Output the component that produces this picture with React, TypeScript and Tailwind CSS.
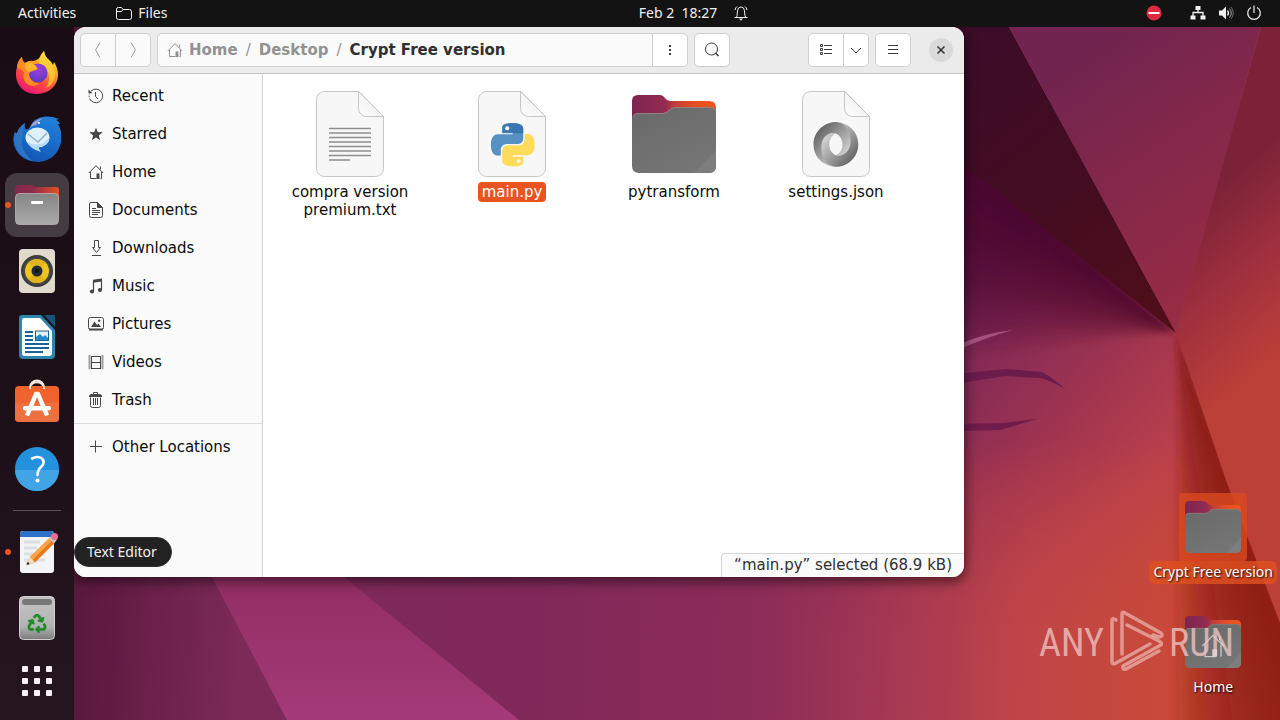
import React, { ReactNode } from 'react';
import { FaRecycle } from 'react-icons/fa';

const PYTHON_HALF =
  'M14.25.18l.9.2.73.26.59.3.45.32.34.34.25.34.16.33.1.3.04.26.02.2-.01.13V8.5l-.05.63-.13.55-.21.46-.26.38-.3.31-.33.25-.35.19-.35.14-.33.1-.3.07-.26.04-.21.02H8.77l-.69.05-.59.14-.5.22-.41.27-.33.32-.27.35-.2.36-.15.37-.1.35-.07.32-.04.27-.02.21v3.06H3.17l-.21-.03-.28-.07-.32-.12-.35-.18-.36-.26-.36-.36-.35-.46-.32-.59-.28-.73-.21-.88-.14-1.05-.05-1.23.06-1.22.16-1.04.24-.87.32-.71.36-.57.4-.44.42-.33.42-.24.4-.16.36-.1.32-.05.24-.01h.16l.06.01h8.16v-.83H6.18l-.01-2.75-.02-.37.05-.34.11-.31.17-.28.25-.26.31-.23.38-.2.44-.18.51-.15.58-.12.64-.1.71-.06.77-.04.84-.02 1.27.05zm-6.3 1.98l-.23.33-.08.41.08.41.23.34.33.22.41.09.41-.09.33-.22.23-.34.08-.41-.08-.41-.23-.33-.33-.22-.41-.09-.41.09z';

/* ---------- wallpaper ---------- */

const Wallpaper = () => (
  <svg
    className="absolute inset-0 h-full w-full"
    viewBox="0 0 1280 720"
    preserveAspectRatio="xMidYMid slice"
    aria-hidden="true"
  >
    <defs>
      <linearGradient id="wBase" gradientUnits="userSpaceOnUse" x1="74" y1="600" x2="1180" y2="640">
        <stop offset="0" stopColor="#5a183e" />
        <stop offset="0.15" stopColor="#7c2a58" />
        <stop offset="0.4" stopColor="#80285a" />
        <stop offset="0.62" stopColor="#8c2c58" />
        <stop offset="0.76" stopColor="#a93a52" />
        <stop offset="0.86" stopColor="#c04547" />
        <stop offset="1" stopColor="#c94a38" />
      </linearGradient>
      <linearGradient id="wLower" gradientUnits="userSpaceOnUse" x1="920" y1="330" x2="1190" y2="560">
        <stop offset="0" stopColor="#74245a" />
        <stop offset="0.5" stopColor="#a2354f" />
        <stop offset="0.75" stopColor="#b8404c" />
        <stop offset="1" stopColor="#c64640" />
      </linearGradient>
      <linearGradient id="wLowerFade" x1="0" y1="0" x2="0" y2="1">
        <stop offset="0" stopColor="#fff" />
        <stop offset="0.55" stopColor="#fff" />
        <stop offset="0.85" stopColor="#000" />
      </linearGradient>
      <mask id="wLowerMask">
        <rect x="800" y="100" width="480" height="620" fill="url(#wLowerFade)" />
      </mask>
      <filter id="wSoft">
        <feGaussianBlur stdDeviation="3" />
      </filter>
      <linearGradient id="wDark" gradientUnits="userSpaceOnUse" x1="970" y1="60" x2="1170" y2="330">
        <stop offset="0" stopColor="#3d0c28" />
        <stop offset="0.5" stopColor="#440c20" />
        <stop offset="1" stopColor="#500e18" />
      </linearGradient>
      <linearGradient id="wTop" gradientUnits="userSpaceOnUse" x1="1050" y1="70" x2="1200" y2="290">
        <stop offset="0" stopColor="#70244f" />
        <stop offset="0.5" stopColor="#84284a" />
        <stop offset="1" stopColor="#962b44" />
      </linearGradient>
      <linearGradient id="wRight" gradientUnits="userSpaceOnUse" x1="1200" y1="200" x2="1310" y2="330">
        <stop offset="0" stopColor="#7b2238" />
        <stop offset="0.5" stopColor="#a0303e" />
        <stop offset="1" stopColor="#bc4038" />
      </linearGradient>
      <linearGradient id="wStripe" x1="0" y1="0" x2="0" y2="1">
        <stop offset="0" stopColor="#922e64" />
        <stop offset="1" stopColor="#a43a78" />
      </linearGradient>
    </defs>
    <rect width="1280" height="720" fill="url(#wBase)" />
    <g mask="url(#wLowerMask)">
      <path d="M800 100H1280V720H800Z" fill="url(#wLower)" />
    </g>
    {/* shading fans out from the point where the folds meet */}
    <g fill="#40102f" fillOpacity="0.07" filter="url(#wSoft)">
      {Array.from({ length: 25 }, (_, i) => (
        <path key={i} d={`M1176 333L900 100V${125 + i * 10}Z`} />
      ))}
    </g>
    <g fill="#8c1a14" fillOpacity="0.1" filter="url(#wSoft)">
      {Array.from({ length: 20 }, (_, i) => (
        <path key={i} d={`M1176 333L1330 740H${1305 - i * 7}Z`} />
      ))}
    </g>
    <path d="M900 27H1009L1176 333L900 115Z" fill="url(#wDark)" />
    <path d="M1009 27H1261L1176 333Z" fill="url(#wTop)" />
    <path d="M1261 27H1280V623L1226 480L1176 333Z" fill="url(#wRight)" />
    <path d="M212 577H344L519 720H287Z" fill="url(#wStripe)" />
    <path d="M960 344Q985 333 1013 330Q990 336 960 349Z" fill="#a85080" />
    <path d="M955 374L1006 369L1042 372Q1056 380 1065 389Q1052 381 1040 378L1005 376L955 384Z" fill="#6c1c4c" />
    <path d="M955 424L1003 423L1037 419L1000 430L955 431Z" fill="#701c4c" />
  </svg>
);

/* ---------- symbolic icons ---------- */

interface SymProps {
  children: ReactNode;
  className?: string;
}

const Sym = ({ children, className = 'size-4' }: SymProps) => (
  <svg
    className={`${className} shrink-0`}
    viewBox="0 0 16 16"
    fill="none"
    stroke="currentColor"
    strokeWidth="1"
    aria-hidden="true"
  >
    {children}
  </svg>
);

const HomeGlyph = () => (
  <>
    <path d="M.8 9L8 1.7L15.2 9M2.5 8V14.5H8.5M13.5 8V14.5H12.5M12.5 2.5V5.5" />
    <path d="M8.5 9.5H11.5V15H8.5Z" fill="currentColor" stroke="none" />
  </>
);

const places = [
  {
    name: 'Recent',
    glyph: (
      <>
        <path d="M3 3.2A6.8 6.8 0 1 1 1.6 10.5" />
        <path d="M1.2 9.2A6.8 6.8 0 0 1 1.6 5.5" strokeDasharray="1.5 1.2" />
        <path d="M.5 1.5V5.3H4.5Z" fill="currentColor" stroke="none" />
        <path d="M7.5 4V8.5L10 11" />
      </>
    ),
  },
  {
    name: 'Starred',
    glyph: (
      <path
        d="M8 1.5L9.7 6.1L14.7 6.3L10.8 9.4L12.2 14.2L8 11.4L3.8 14.2L5.2 9.4L1.3 6.3L6.3 6.1Z"
        fill="currentColor"
        stroke="none"
      />
    ),
  },
  { name: 'Home', glyph: <HomeGlyph /> },
  {
    name: 'Documents',
    glyph: (
      <>
        <path d="M3 .5H9.5L14.5 5.5V13.5A2 2 0 0 1 12.5 15.5H3.5A2 2 0 0 1 1.5 13.5V2A1.5 1.5 0 0 1 3 .5Z" />
        <path d="M9.5 .5V5.5H14.5Z" fill="currentColor" />
        <path d="M4 6.5H8M4 8.5H12M4 10.5H12M4 12.5H10" />
      </>
    ),
  },
  {
    name: 'Downloads',
    glyph: <path d="M6.5 .5H10.5V7.5H12.5L8.5 12.5L4.5 7.5H6.5ZM4 15.5H13" />,
  },
  {
    name: 'Music',
    glyph: (
      <>
        <path d="M5.5 13V2.5M13.5 1V11.5" strokeWidth="1.2" />
        <path d="M5 1.8L14 .6V3.6L5 4.8Z" fill="currentColor" stroke="none" />
        <circle cx="4" cy="13.5" r="2.1" fill="currentColor" stroke="none" />
        <circle cx="12" cy="12" r="2.1" fill="currentColor" stroke="none" />
      </>
    ),
  },
  {
    name: 'Pictures',
    glyph: (
      <>
        <rect x=".5" y="1.5" width="15" height="12" rx="2" />
        <path d="M1 13.5H15" strokeWidth="2" />
        <path d="M3 11L6.5 5.5L9 9L10.5 7.5L13 11Z" fill="currentColor" stroke="none" />
        <circle cx="11.2" cy="4.8" r="1.2" fill="currentColor" stroke="none" />
      </>
    ),
  },
  {
    name: 'Videos',
    glyph: (
      <>
        <path d="M3.5 2V15M12.5 2V15M3 2.5H13M3 8.5H13M3 14.5H13" />
        <path d="M1.5 1.5V15.5M14.5 1.5V15.5" strokeWidth="2" strokeDasharray="1 1" />
      </>
    ),
  },
  {
    name: 'Trash',
    glyph: (
      <>
        <path d="M2.5 5.5V13.5A2 2 0 0 0 4.5 15.5H10.5A2 2 0 0 0 12.5 13.5V5.5M5.5 6V13M7.5 6V13M9.5 6V13M5.5 2V.5H9.5V2" />
        <path d="M1 5V3.5L3 2H12L14 3.5V5Z" fill="currentColor" stroke="none" />
      </>
    ),
  },
];

/* ---------- file and folder artwork ---------- */

const Sheet = ({ children }: { children: ReactNode }) => (
  <svg className="size-24" viewBox="0 0 96 96" aria-hidden="true">
    <defs>
      <linearGradient id="sheetCorner" x1="0" y1="1" x2="1" y2="0">
        <stop offset="0" stopColor="#fdfdfd" />
        <stop offset="1" stopColor="#ececec" />
      </linearGradient>
    </defs>
    <path
      d="M22.5 5.5H57L81.5 30.5V82.5A8 8 0 0 1 73.5 90.5H22.5A8 8 0 0 1 14.5 82.5V13.5A8 8 0 0 1 22.5 5.5Z"
      fill="#f7f7f7"
      stroke="#c6c6c2"
    />
    <path d="M56.5 5.5V22.5A8 8 0 0 0 64.5 30.5H81.5Z" fill="url(#sheetCorner)" stroke="#c6c6c2" />
    {children}
  </svg>
);

const TextFileIcon = () => (
  <Sheet>
    <path
      d="M27 42.5H69M27 47H69M27 51.5H69M27 56H69M27 60.5H69M27 65H69M27 69.5H69M27 74H48"
      stroke="#8d908c"
      strokeWidth="1.3"
    />
  </Sheet>
);

const PythonFileIcon = () => (
  <Sheet>
    <g transform="translate(27 37) scale(1.81)">
      <path d={PYTHON_HALF} fill="#5591c2" />
      <path d="M6.2 5.7V3Q6.2 .1 12 .1T17.8 3V5.7Z" fill="#2f6ca8" fillOpacity="0.7" />
      <path d={PYTHON_HALF} fill="#ffdb5c" transform="rotate(180 12 12)" />
      <circle cx="9" cy="2.9" r="1.1" fill="#fff" />
    </g>
  </Sheet>
);

const JsonFileIcon = () => (
  <Sheet>
    <defs>
      <linearGradient id="jsonA" x1="0.15" y1="0.15" x2="0.85" y2="0.85">
        <stop offset="0" stopColor="#666" />
        <stop offset="1" stopColor="#e4e4e4" />
      </linearGradient>
      <linearGradient id="jsonB" x1="0.85" y1="0.85" x2="0.15" y2="0.15">
        <stop offset="0" stopColor="#666" />
        <stop offset="1" stopColor="#dedede" />
      </linearGradient>
    </defs>
    <g transform="translate(25.5 36) scale(0.28)">
      <path
        d="M79.865 119.1c35.398 48.255 70.04-13.469 69.989-50.587C149.794 24.627 105.312.1 79.836.1 38.943.1 0 33.895 0 80.135 0 131.531 44.64 160 79.836 160c-7.965-1.147-34.506-6.834-34.863-67.967-.24-41.347 13.488-57.866 34.805-50.599.477.177 23.514 9.265 23.514 38.951 0 29.56-23.427 38.716-23.427 38.716z"
        fill="url(#jsonA)"
      />
      <path
        d="M79.823 41.401C56.433 33.339 27.78 52.618 27.78 91.23c0 63.048 46.721 68.77 52.384 68.77C121.057 160 160 126.204 160 79.964 160 28.568 115.36.1 80.164.1c9.748-1.35 52.541 10.55 52.541 69.037 0 38.141-31.953 58.905-52.735 50.033-.478-.177-23.514-9.264-23.514-38.951 0-29.56 23.367-38.818 23.367-38.818z"
        fill="url(#jsonB)"
      />
    </g>
  </Sheet>
);

const FolderIcon = ({ className = 'size-24', children }: { className?: string; children?: ReactNode }) => (
  <svg className={className} viewBox="0 0 96 96" aria-hidden="true">
    <defs>
      <linearGradient id="folderBack" x1="0" y1="0" x2="1" y2="0">
        <stop offset="0" stopColor="#7d2452" />
        <stop offset="0.4" stopColor="#952b50" />
        <stop offset="0.5" stopColor="#c23d3a" />
        <stop offset="0.75" stopColor="#e64e22" />
        <stop offset="1" stopColor="#f0541c" />
      </linearGradient>
      <linearGradient id="folderFront" x1="0" y1="0" x2="0.6" y2="1">
        <stop offset="0" stopColor="#696969" />
        <stop offset="1" stopColor="#757575" />
      </linearGradient>
    </defs>
    <path d="M12 9H34Q37 9 39 12T44 15H83Q90 15 90 22V50H6V15Q6 9 12 9Z" fill="url(#folderBack)" />
    <path
      d="M6 33Q6 27 12 27H37Q40 27 43 24T49 21H83Q90 21 90 27V80Q90 87 83 87H13Q6 87 6 80Z"
      fill="url(#folderFront)"
    />
    <path d="M68 87L90 64V80Q90 87 83 87Z" fill="#7d7d7d" />
    <path d="M7 31Q8 27.5 12 27.5H37Q40 27.5 43 24.5T49 21.5H83Q88 21.5 89.5 25" fill="none" stroke="#9a8580" strokeWidth="0.8" />
    {children}
  </svg>
);

const files = [
  { name: 'compra version premium.txt', icon: <TextFileIcon /> },
  { name: 'main.py', icon: <PythonFileIcon />, selected: true },
  { name: 'pytransform', icon: <FolderIcon /> },
  { name: 'settings.json', icon: <JsonFileIcon /> },
];

/* ---------- dock icons, all drawn on a 48 unit grid ---------- */

const FirefoxIcon = () => (
  <>
    <defs>
      <linearGradient id="fxBody" x1="0.8" y1="0" x2="0.25" y2="1">
        <stop offset="0" stopColor="#fff04a" />
        <stop offset="0.35" stopColor="#ffa21f" />
        <stop offset="0.65" stopColor="#ff4a3c" />
        <stop offset="1" stopColor="#e8127c" />
      </linearGradient>
      <radialGradient id="fxGlobe" cx="0.5" cy="0.3" r="0.7">
        <stop offset="0" stopColor="#a03ce0" />
        <stop offset="1" stopColor="#5a3cc0" />
      </radialGradient>
    </defs>
    <path
      d="M4 18Q5 11 9 8Q9 12 12 14Q16 11 20 12Q25 11 27 8Q28 5 31 2Q32 8 36 11Q39 13 40 16L41 13Q45 19 45 26A21 19 0 0 1 24 45Q9 45 4 32Q2 25 4 18Z"
      fill="url(#fxBody)"
    />
    <path d="M31 2Q32 8 36 11Q42 17 42 26Q41 36 33 39Q38 31 35 23Q32 17 26 15Q25 8 31 2Z" fill="#ffd53a" fillOpacity="0.7" />
    <circle cx="25" cy="24" r="9.5" fill="url(#fxGlobe)" />
    <path d="M4 18Q5 11 9 8Q9 12 12 14Q17 12 22 17Q24 18 25 20Q21 22 17 23Q15 25 17 29Q20 35 27 34Q20 40 13 34Q9 29 11 23Q7 20 4 18Z" fill="#ff8c22" />
    <path d="M12 14Q17 12 22 16Q24 17 24 20Q19 21 16 23Q12 21 12 14Z" fill="#ffb92e" />
  </>
);

const ThunderbirdIcon = () => (
  <>
    <defs>
      <linearGradient id="tbBody" x1="0.7" y1="0" x2="0.3" y2="1">
        <stop offset="0" stopColor="#2080dc" />
        <stop offset="1" stopColor="#1255b0" />
      </linearGradient>
    </defs>
    <path
      d="M17 12Q20 3 32 1.5Q40 1 46 4L43 5Q46 6 47 9L45 9Q50 18 48 27Q44 45 26 47Q10 47 3 35Q-2 26 2 17Q3 19 4 18Q6 12 12 8Q11 12 13 14Q15 15 17 12Z"
      fill="url(#tbBody)"
    />
    <path d="M2 17Q-1 26 4 35Q9 44 20 46Q8 37 9 26Q9 17 12 8Q6 12 4 18Q3 19 2 17Z" fill="#2c74c4" />
    <path d="M17 13Q20 5 30 3Q25 6 23 10Q20 10 17 13Z" fill="#a7a0cc" />
    <ellipse cx="24.5" cy="22.5" rx="12" ry="10" fill="#e0f0fa" />
    <path d="M14 27Q17 34 28 37Q25 33 26 32Q36 31 36.5 22Q28 34 14 27Z" fill="#b4dcf6" />
    <path d="M15 19L25 27L34 18" fill="none" stroke="#8cb4d0" strokeWidth="1.5" />
    <circle cx="26" cy="8" r="1" fill="#fff" />
  </>
);

const FilesAppIcon = () => (
  <>
    <defs>
      <linearGradient id="faBack" x1="0" y1="0" x2="1" y2="0">
        <stop offset="0" stopColor="#80284c" />
        <stop offset="0.4" stopColor="#8c2c4a" />
        <stop offset="1" stopColor="#e8501f" />
      </linearGradient>
      <linearGradient id="faFront" x1="0" y1="0" x2="0" y2="1">
        <stop offset="0" stopColor="#858585" />
        <stop offset="1" stopColor="#aaa" />
      </linearGradient>
    </defs>
    <path d="M5 4H18Q20 4 22 6H43Q46 6 46 9V20H2V7Q2 4 5 4Z" fill="url(#faBack)" />
    <rect x="2.5" y="12.5" width="43" height="31" rx="4" fill="url(#faFront)" stroke="#b9b5b3" strokeWidth="0.8" />
    <rect x="18" y="20" width="12" height="3" rx="1" fill="#fff" />
  </>
);

const RhythmboxIcon = () => (
  <>
    <rect x="6" y="2" width="36" height="44" rx="4" fill="#dfdacb" />
    <circle cx="24" cy="24" r="16" fill="#3b3b3b" />
    <circle cx="24" cy="24" r="14" fill="#474747" />
    <circle cx="24" cy="24" r="12" fill="#f0c420" />
    <path d="M24 24L15.5 15.5A12 12 0 0 1 32.5 15.5ZM24 24L32.5 32.5A12 12 0 0 1 15.5 32.5Z" fill="#e0b41a" />
    <circle cx="24" cy="24" r="5.5" fill="#222a33" />
    <circle cx="24" cy="24" r="2" fill="#0e1116" />
  </>
);

const WriterIcon = () => (
  <>
    <path d="M9 2H28L42 17V42Q42 46 38 46H10Q6 46 6 42V5Q6 2 9 2Z" fill="#2b86ae" />
    <path d="M31 2H42V14Z" fill="#14537e" />
    <path d="M11 5H27L39 18V40Q39 43 36 43H11Q9 43 9 40V8Q9 5 11 5Z" fill="#fff" />
    <path d="M12 19H20M12 23H20M12 27H20M12 31H36M12 35H36M12 39H30" stroke="#17649a" strokeWidth="1.8" />
    <rect x="22.5" y="18" width="13" height="9.5" fill="#e3f2fb" stroke="#17649a" />
    <path d="M23 27V24L27 21L30 24L32 22L35 25V27Z" fill="#2389c9" />
  </>
);

const SoftwareIcon = () => (
  <>
    <path d="M17 9A7.2 7.5 0 0 1 31 9" fill="none" stroke="#f3ebe2" strokeWidth="1.8" />
    <rect x="2" y="7" width="44" height="36" rx="4" fill="#f0632f" />
    <path d="M2 24H46V39Q46 43 42 43H6Q2 43 2 39Z" fill="#ec7040" />
    <path d="M17 10V8A7 6.5 0 0 1 31 8V10" fill="none" stroke="#f6e9e2" strokeWidth="1.8" />
    <path d="M14 36.5L23 15H25L34 36.5" fill="none" stroke="#fff" strokeWidth="4.5" strokeLinejoin="round" />
    <rect x="10" y="27" width="28" height="4.5" rx="2" fill="#fff" />
  </>
);

const HelpIcon = () => (
  <>
    <circle cx="24" cy="24" r="22" fill="#2491dc" />
    <path d="M2 25H46A22 21 0 0 1 2 25Z" fill="#41a4e4" />
    <path d="M19 13.5Q25 10.5 29 13.5Q32.5 17 28.5 21.5Q24.5 25 24.5 30" fill="none" stroke="#fff" strokeWidth="2.6" strokeLinecap="round" />
    <circle cx="24.5" cy="35.5" r="2" fill="#fff" />
  </>
);

const TextEditorIcon = () => (
  <>
    <rect x="7" y="3" width="34" height="42" rx="3" fill="#f2f4f6" />
    <path d="M7 9V6Q7 3 10 3H38Q41 3 41 6V9Z" fill="#2f70c8" />
    <path d="M11 14H27M11 20H24M11 26H32M11 32H32" stroke="#dcdfe3" strokeWidth="3" />
    <path d="M17 29L37 9.5L42 14.5L22 34.5L13 37.5Z" fill="#e87a1c" />
    <path d="M17 29L37 9.5L39.5 12L19.5 32Z" fill="#faa648" />
    <path d="M17 29L22 34.5L13 37.5Z" fill="#f3dfc4" />
    <circle cx="15" cy="35.5" r="1.3" fill="#333" />
    <path d="M36 10.5L39 7L44 11.5L41 15.5Z" fill="#c6c6c6" />
    <circle cx="41.5" cy="8.5" r="3.5" fill="#ea6f90" />
  </>
);

const TrashAppIcon = () => (
  <>
    <defs>
      <linearGradient id="trBody" x1="0" y1="0" x2="0" y2="1">
        <stop offset="0" stopColor="#c4c4c4" />
        <stop offset="0.7" stopColor="#b2b2b2" />
        <stop offset="1" stopColor="#7c7c7c" />
      </linearGradient>
    </defs>
    <rect x="6.5" y="2.5" width="35" height="43" rx="4" fill="url(#trBody)" stroke="#cfcfcf" />
    <rect x="9" y="5" width="30" height="6" rx="3" fill="#777" />
    <FaRecycle size={19} x="14.5" y="20" color="#1f8a26" stroke="#1f8a26" strokeWidth="14" />
  </>
);

const dockApps = [
  { name: 'Firefox', art: <FirefoxIcon /> },
  { name: 'Thunderbird', art: <ThunderbirdIcon /> },
  { name: 'Files', art: <FilesAppIcon />, running: true, focused: true },
  { name: 'Rhythmbox', art: <RhythmboxIcon /> },
  { name: 'LibreOffice Writer', art: <WriterIcon /> },
  { name: 'Ubuntu Software', art: <SoftwareIcon /> },
  { name: 'Help', art: <HelpIcon /> },
];

interface DockButtonProps {
  name: string;
  art: ReactNode;
  running?: boolean;
  focused?: boolean;
  children?: ReactNode;
}

const DockButton = ({ name, art, running, focused, children }: DockButtonProps) => (
  <button
    aria-label={name}
    className={`relative flex size-16 shrink-0 items-center justify-center rounded-xl ${focused ? 'bg-[#443c42]' : ''}`}
  >
    {running && <span className="absolute top-1/2 left-0 size-1.5 -translate-y-1/2 rounded-full bg-[#e95420]" />}
    <svg className="size-12" viewBox="0 0 48 48" aria-hidden="true">
      {art}
    </svg>
    {children}
  </button>
);

const Dock = () => (
  <nav
    aria-label="Dock"
    className="relative z-20 flex w-[74px] shrink-0 flex-col items-center gap-0.5 bg-gradient-to-b from-[#190c15] via-[#1c0f17] to-[#25151f] pt-3.5"
  >
    {dockApps.map((app) => (
      <DockButton key={app.name} {...app} />
    ))}
    <div className="my-[7px] h-px w-12 bg-[#5b5158]" />
    <DockButton name="Text Editor" art={<TextEditorIcon />} running>
      <span
        role="tooltip"
        className="absolute left-[69px] rounded-full border border-[#303030] bg-[#222] py-1 pr-3.5 pl-3 text-sm whitespace-nowrap text-[#f2f2f2]"
      >
        Text Editor
      </span>
    </DockButton>
    <DockButton name="Trash" art={<TrashAppIcon />} />
    <button aria-label="Show Applications" className="flex h-[58px] w-16 items-center justify-center">
      <span className="grid grid-cols-3 gap-1.5">
        {Array.from({ length: 9 }, (_, i) => (
          <span key={i} className="size-1.5 rounded-[1px] bg-[#f8f0f6]" />
        ))}
      </span>
    </button>
  </nav>
);

/* ---------- top bar ---------- */

const TopBar = () => (
  <header className="relative z-20 flex h-[27px] shrink-0 items-center bg-[#131313] pb-0.5 text-sm text-[#f0f0f0]">
    <div className="flex flex-1 items-center gap-10 pl-[18px]">
      <button>Activities</button>
      <button className="flex items-center gap-1.5">
        <Sym>
          <path d="M2.5 2.5H5.5L7 4.5H13.5Q15.5 4.5 15.5 6.5V12.5Q15.5 14.5 13.5 14.5H2.5Q.5 14.5 .5 12.5V4Q.5 2.5 2.5 2.5ZM.5 6.5H5.5L7 4.5" />
        </Sym>
        Files
      </button>
    </div>
    <button className="flex items-center gap-4 pl-[108px] whitespace-pre">
      {'Feb 2  18:27'}
      <Sym>
        <path d="M3.5 12.5C4.5 11 4 5 5.5 3Q8 .8 10.5 3C12 5 11.5 11 12.5 12.5ZM2 5Q2.5 2.5 4 1.5M14 5Q13.5 2.5 12 1.5M1.5 12.5H14.5" />
        <path d="M6 13.5H10L8 15.8Z" fill="currentColor" stroke="none" />
      </Sym>
    </button>
    <div className="flex flex-1 items-center justify-end gap-3 pr-[18px]">
      <button aria-label="Do not disturb" className="mr-4">
        <Sym>
          <circle cx="8" cy="8" r="7.5" fill="#dd2a40" stroke="none" />
          <path d="M2.5 8H13.5" stroke="#fff" strokeWidth="2" />
        </Sym>
      </button>
      <button aria-label="System menu" className="flex items-center gap-3">
        <Sym>
          <path d="M5.5 1H10.5V5H5.5ZM.5 10.5H5.5V14.5H.5ZM10.5 10.5H15.5V14.5H10.5Z" fill="currentColor" stroke="none" />
          <path d="M8 5V8M3 11V7.5H13V11" strokeWidth="1.3" />
        </Sym>
        <Sym>
          <path d="M1 5.5H4L8 1.5V14.5L4 10.5H1Z" fill="currentColor" stroke="none" />
          <path d="M9.5 5.5Q11.5 8 9.5 10.5" strokeWidth="1.3" />
          <path d="M11.5 3.5Q15 8 11.5 12.5" strokeOpacity="0.7" />
          <path d="M13 2Q17.5 8 13 14" strokeOpacity="0.4" />
        </Sym>
        <Sym>
          <path d="M5 2.5A6.3 6.3 0 1 0 11 2.5M8 .5V8" strokeWidth="1.2" />
        </Sym>
      </button>
    </div>
  </header>
);

/* ---------- file manager window ---------- */

const headerButton = 'flex h-[34px] items-center justify-center border border-[#cfcfcf] bg-white text-[#3a3a3a]';

const WindowHeader = () => (
  <div className="flex items-center gap-1.5 border-b border-[#c4c4c4] bg-[#ebebeb] px-1.5 py-1.5">
    <div className="flex text-[#9a9a9a]">
      <button aria-label="Back" className="flex h-[34px] w-9 items-center justify-center rounded-l-[5px] border border-[#cfcfcf] bg-[#fafafa]">
        <Sym>
          <path d="M10 .5L5.5 8L10 15.5" />
        </Sym>
      </button>
      <button aria-label="Forward" className="-ml-px flex h-[34px] w-9 items-center justify-center rounded-r-[5px] border border-[#cfcfcf] bg-[#fafafa]">
        <Sym>
          <path d="M6 .5L10.5 8L6 15.5" />
        </Sym>
      </button>
    </div>
    <div className="flex flex-1">
      <div className="flex h-[34px] flex-1 items-center gap-1.5 rounded-l-[5px] border border-[#cfcfcf] bg-[#fafafa] pl-[9px] font-bold text-[#929292]">
        <Sym>
          <HomeGlyph />
        </Sym>
        <a href="#home">Home</a>
        <span className="px-0.5 font-normal">/</span>
        <a href="#desktop">Desktop</a>
        <span className="px-0.5 font-normal">/</span>
        <a href="#folder" aria-current="page" className="text-[#303030]">
          Crypt Free version
        </a>
      </div>
      <button aria-label="Folder menu" className={`${headerButton} -ml-px w-9 rounded-r-[5px]`}>
        <Sym>
          <path d="M7 3H9V5H7ZM7 7H9V9H7ZM7 11H9V13H7Z" fill="currentColor" stroke="none" />
        </Sym>
      </button>
    </div>
    <button aria-label="Search" className={`${headerButton} mr-[72px] w-9 rounded-[5px]`}>
      <Sym>
        <circle cx="7.5" cy="7" r="6" />
        <path d="M11.5 11L14.5 14" strokeWidth="1.5" />
      </Sym>
    </button>
    <div className="flex">
      <button aria-label="List view" className={`${headerButton} w-9 rounded-l-[5px]`}>
        <Sym>
          <path d="M2.5 2.5H4.5V4.5H2.5ZM2.5 6.5H4.5V8.5H2.5ZM2.5 10.5H4.5V12.5H2.5ZM6 3.5H14M6 7.5H14M6 11.5H14" />
        </Sym>
      </button>
      <button aria-label="View options" className={`${headerButton} -ml-px w-[26px] rounded-r-[5px]`}>
        <Sym>
          <path d="M3 6L8 11L13 6" />
        </Sym>
      </button>
    </div>
    <button aria-label="Main menu" className={`${headerButton} w-9 rounded-[5px]`}>
      <Sym>
        <path d="M3 3.5H13M3 7.5H13M3 11.5H13" />
      </Sym>
    </button>
    <button aria-label="Close" className="mr-[5px] ml-3 flex size-6 items-center justify-center rounded-full bg-[#dadada] text-[#303030]">
      <Sym>
        <path d="M4.5 4.5L11.5 11.5M11.5 4.5L4.5 11.5" strokeWidth="1.5" />
      </Sym>
    </button>
  </div>
);

const PlaceButton = ({ name, glyph }: { name: string; glyph: ReactNode }) => (
  <button className="flex h-[38px] w-full items-center gap-2 pl-3.5 text-left">
    <span className="text-[#464646]">
      <Sym>{glyph}</Sym>
    </span>
    {name}
  </button>
);

const FileWindow = () => (
  <section
    aria-label="Crypt Free version"
    className="absolute top-0 left-0 flex h-[550px] w-[890px] max-w-full flex-col overflow-hidden rounded-xl bg-white font-['DejaVu_Sans',sans-serif] text-[15px] leading-[18px] text-[#0c0c0c] shadow-[0_3px_12px_2px_rgba(0,0,0,0.5)]"
  >
    <WindowHeader />
    <div className="flex min-h-0 flex-1">
      <aside className="w-[189px] shrink-0 border-r border-[#d4d4d4] bg-[#fafafa] pt-[3px]">
        {places.map((place) => (
          <PlaceButton key={place.name} {...place} />
        ))}
        <div className="my-1 h-px bg-[#dcdcdc]" />
        <PlaceButton name="Other Locations" glyph={<path d="M2 7.5H14M7.5 1.5V13.5" />} />
      </aside>
      <main className="relative flex flex-1 flex-wrap content-start pt-3 pl-1.5">
        {files.map((file) => (
          <button key={file.name} className="flex w-[162px] flex-col items-center">
            {file.icon}
            <span
              className={`max-w-[130px] rounded px-1 py-px text-center ${file.selected ? 'bg-[#e95420] text-white' : ''}`}
            >
              {file.name}
            </span>
          </button>
        ))}
        <p className="absolute right-0 bottom-0 rounded-tl-[4px] border-t border-l border-[#d8d8d8] bg-[#fafafa] py-[3px] pr-3 pl-3 leading-[17px] text-[#303030]">
          “main.py” selected (68.9 kB)
        </p>
      </main>
    </div>
  </section>
);

/* ---------- desktop ---------- */

const DesktopIcons = () => (
  <div className="absolute top-[466px] right-[3px] flex flex-col items-center gap-6 text-sm text-white">
    <button className="flex flex-col items-center">
      <span className="flex size-[68px] items-center justify-center rounded bg-[#d9481f]/80">
        <FolderIcon className="size-16" />
      </span>
      <span className="rounded-md bg-[#e0501f]/80 px-1 pb-px leading-[22px] [text-shadow:1px_1px_2px_#000]">Crypt Free version</span>
    </button>
    <button className="flex flex-col items-center">
      <span className="flex size-[68px] items-center justify-center">
        <FolderIcon className="size-16">
          <path d="M32 54L48 38L64 54M36 52V70H52M60 52V70M58 39V45" fill="none" stroke="#c9c9c9" strokeWidth="2" />
          <path d="M47 59H54V70H47Z" fill="#d8d8d8" />
        </FolderIcon>
      </span>
      <span className="px-1 pb-px leading-[22px] [text-shadow:1px_1px_2px_#000]">Home</span>
    </button>
  </div>
);

const Watermark = () => (
  <svg
    className="pointer-events-none absolute top-[580px] right-[34px] h-[68px] w-[210px]"
    viewBox="0 0 210 68"
    fill="#f0c8c8"
    fillOpacity="0.75"
    fontFamily="'Liberation Sans Narrow', 'Roboto Condensed', 'Open Sans Condensed', Roboto, sans-serif"
    fontSize="38"
  >
    <text x="3" y="49">ANY</text>
    <text x="133" y="49">RUN</text>
    <g fill="none" stroke="#f0c0bc" strokeOpacity="0.65" strokeWidth="3.5" strokeLinejoin="round" strokeLinecap="round">
      <path d="M80 13Q76 10 76 14V55Q76 58 80 56L114 37" />
      <path d="M86 47V7Q86 4 89 6L125 26Q128 29 123 30L117 28" />
      <path d="M91 18L123 34Q128 37 123 39L87 59Q86 63 90 62L123 44" />
    </g>
  </svg>
);

export default function App() {
  return (
    <div className="relative flex min-h-screen flex-col overflow-hidden bg-[#5a183e] font-['Noto_Sans',sans-serif]">
      <Wallpaper />
      <TopBar />
      <div className="flex flex-1">
        <Dock />
        <div className="relative flex-1">
          <FileWindow />
          <DesktopIcons />
          <Watermark />
        </div>
      </div>
    </div>
  );
}
